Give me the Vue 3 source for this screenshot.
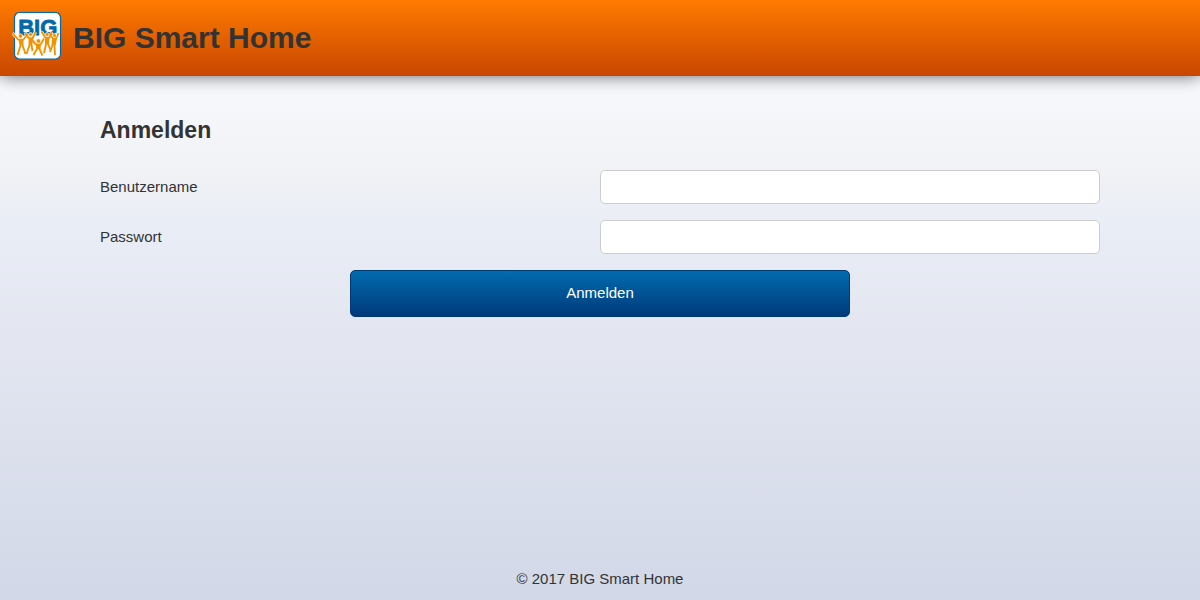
<script setup>
import { ref } from 'vue'

const username = ref('')
const password = ref('')

const figures = [
  'M.5 21L6 27.5L11 28L16 22M7.5 28L8.5 33.5L5.500 43M10.5 28L10.5 33L13.500 42M9 28L9.5 33',
  'M13 20.5L16.5 26L20.5 26.5L23.5 20M17.5 26L17.5 33L14.5 42M20 26.5L19.5 33L20.5 39M18.5 27L18.500 33',
  'M19 27L24 32.5L28.5 32.5L32 26.5M25 33L25 37L21.5 43M28 33L27.500 37L30.5 43.5M26.5 33L26.5 37',
  'M29.5 19.5L33.5 26L37 26L40 20M34 26L34 32L32 41M36.5 26L36 32L38.5 38M35 27L35 32',
  'M37.5 21L41 27L44 27L46.5 21M41 27L40.5 33L38 40M44 27L42.5 34L43 43M42.5 28L42 33',
]
</script>

<template>
  <div class="page">
    <header class="header">
      <svg class="logo" viewBox="0 0 50 48" role="img" aria-label="BIG">
        <rect class="plate" x="2.5" y="0.5" width="46" height="46.5" rx="5" />
        <text class="mark" x="6.2" y="23">BIG</text>
        <path v-for="d in figures" :key="d" class="outline" :d="d" />
        <path v-for="d in figures" :key="d" class="people" :d="d" />
        <g class="heads">
          <circle cx="8.5" cy="24" r="2.2" />
          <circle cx="18.5" cy="22.5" r="2" />
          <circle cx="26.5" cy="29" r="2.3" />
          <circle cx="35" cy="22.5" r="2" />
          <circle cx="42.5" cy="23.5" r="2" />
        </g>
      </svg>
      <h1 class="title">BIG Smart Home</h1>
    </header>

    <main class="content">
      <h2 class="heading">Anmelden</h2>
      <form class="form" @submit.prevent>
        <div class="row">
          <label for="username">Benutzername</label>
          <input id="username" v-model="username" type="text" autocomplete="username" />
        </div>
        <div class="row">
          <label for="password">Passwort</label>
          <input id="password" v-model="password" type="password" autocomplete="current-password" />
        </div>
        <button class="submit" type="submit">Anmelden</button>
      </form>
    </main>

    <footer class="footer">© 2017 BIG Smart Home</footer>
  </div>
</template>

<style>
body {
  margin: 0;
}
</style>

<style scoped>
.page {
  box-sizing: border-box;
  min-height: 100vh;
  display: flex;
  flex-direction: column;
  font-family: "Liberation Sans", Arial, sans-serif;
  font-size: 15px;
  line-height: 20px;
  color: #333;
  background: linear-gradient(#fcfcfc, #f6f8fb 16%, #eff1f5 30%, #e9edf6 38%, #e4e7f1 54%, #d2d8e8);
}

.header {
  display: flex;
  align-items: flex-start;
  gap: 11px;
  padding: 12px 12px 14px;
  background: linear-gradient(#ff7b00, #c84600);
  box-shadow: 0 0 16px rgba(0, 0, 0, 0.6);
}

.logo {
  width: 50px;
  height: 48px;
}

.plate {
  fill: #fff;
  stroke: #0069aa;
  stroke-width: 1.2;
}

.mark {
  font-family: "Liberation Sans", Arial, sans-serif;
  font-size: 22px;
  font-weight: bold;
  fill: #0069aa;
  stroke: #0069aa;
  stroke-width: 0.8;
}

.outline,
.people {
  fill: none;
  stroke-linejoin: round;
}

.outline {
  stroke: #fff;
  stroke-width: 3;
}

.people {
  stroke: #f39200;
  stroke-width: 1.9;
}

.heads {
  fill: #f39200;
  stroke: #fff;
  stroke-width: 0.6;
}

.title {
  margin: 0;
  padding-top: 2px;
  font-size: 30px;
  line-height: 48px;
}

.content {
  box-sizing: border-box;
  width: 100%;
  max-width: 1032px;
  margin: 0 auto;
  padding: 40px 16px;
  flex: 1;
}

.heading {
  margin: 0 0 26px;
  font-size: 23px;
  line-height: 28px;
}

.form {
  display: flex;
  flex-direction: column;
  gap: 16px;
}

.row {
  display: grid;
  grid-template-columns: 1fr 1fr;
  align-items: center;
}

.row input {
  box-sizing: border-box;
  width: 100%;
  height: 34px;
  padding: 6px 12px;
  border: 1px solid #ccc;
  border-radius: 5px;
  background: #fff;
  color: inherit;
  font: inherit;
}

.submit {
  align-self: center;
  width: 50%;
  padding: 12px 16px 14px;
  border: 1px solid #003974;
  border-radius: 5px;
  background: linear-gradient(#006bae, #003a7b);
  color: #fff;
  font: inherit;
  line-height: 19px;
  cursor: pointer;
}

.footer {
  padding: 8px 16px 11px;
  text-align: center;
}
</style>
